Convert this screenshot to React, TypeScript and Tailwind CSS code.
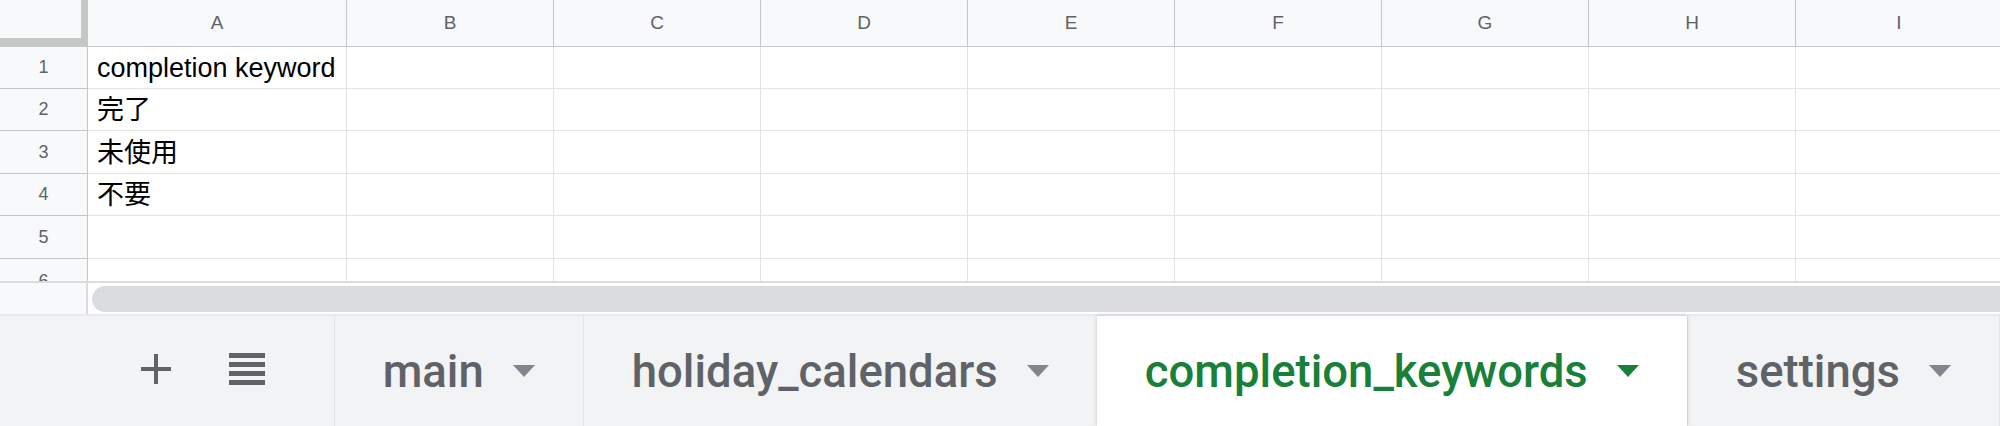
import { Fragment } from "react";

const columns = ["A", "B", "C", "D", "E", "F", "G", "H", "I"];
const rowHeights = ["h-[42px]", "h-[42px]", "h-[43px]", "h-[42px]", "h-[43px]", "h-[22px]"];
const values: Record<number, string> = {
    1: "completion keyword",
    2: "完了",
    3: "未使用",
    4: "不要",
};

const tabs = [
    { name: "main", active: false },
    { name: "holiday_calendars", active: false },
    { name: "completion_keywords", active: true },
    { name: "settings", active: false },
];

const Caret = ({ color }: { color: string }) => (
    <svg width="22" height="12" viewBox="0 0 22 12" className="shrink-0">
        <path d="M0 0 L22 0 L11 12 Z" fill={color} />
    </svg>
);

const SheetTab = ({ name, active }: { name: string, active: boolean }) => {
    if (active) {
        return (
            <div className="relative z-10 flex items-center gap-[29px] px-[48px] bg-white shadow-[0_0_4px_rgba(60,64,67,0.25)]">
                <span className="text-[45.5px] font-medium text-[#188038] pt-[3px]">{name}</span>
                <Caret color="#188038" />
            </div>
        );
    }
    return (
        <div className="flex items-center gap-[29px] px-[48px] border-l border-[#e3e5e8]">
            <span className="text-[45.5px] font-medium text-[#5f6368] pt-[3px]">{name}</span>
            <Caret color="#80868b" />
        </div>
    );
};

export default function App() {
    return (
        <div className="w-[2000px] h-[426px] overflow-hidden bg-white flex flex-col font-['Liberation_Sans','Noto_Sans_CJK_JP',sans-serif]">
            {/* grid */}
            <div className="grid grid-cols-[88px_259px_repeat(8,207px)] w-[2000px] overflow-hidden">
                <div className="h-[47px] bg-[#f8f9fa] border-b border-[#c4c7c5]">
                    <div className="h-[46px] w-[88px] border-r-[7px] border-b-[8px] border-[#c4c7c5]" />
                </div>
                {columns.map((col) => (
                    <div key={col} className="h-[47px] bg-[#f8f9fa] border-b border-r border-[#c4c7c5] flex items-center justify-center text-[19px] text-[#5f6368]">
                        {col}
                    </div>
                ))}
                {rowHeights.map((h, i) => {
                    const row = i + 1;
                    const last = row === rowHeights.length;
                    return (
                        <Fragment key={row}>
                            <div className={`${h} bg-[#f8f9fa] border-r border-[#c4c7c5] ${last ? "" : "border-b"} flex ${last ? "items-start pt-[9px]" : "items-center"} justify-center text-[18px] text-[#5f6368] overflow-hidden`}>
                                {row}
                            </div>
                            {columns.map((col, c) => (
                                <div key={col} className={`${h} border-r border-[#e2e3e3] ${last ? "" : "border-b"} flex items-end pl-[9px] pb-[6px] text-[27px] leading-none text-black whitespace-nowrap overflow-hidden`}>
                                    {c === 0 ? values[row] ?? "" : ""}
                                </div>
                            ))}
                        </Fragment>
                    );
                })}
            </div>

            {/* horizontal scrollbar */}
            <div className="flex h-[33px] border-t-2 border-[#dadce0]">
                <div className="w-[88px] bg-[#f8f9fa] border-r-2 border-[#dadce0]" />
                <div className="flex-1 flex items-center pl-[4px] bg-white">
                    <div className="h-[26px] w-full rounded-l-full bg-[#dadce0]" />
                </div>
            </div>

            {/* sheet tabs */}
            <div className="flex flex-1 bg-[#f1f3f4] border-t-2 border-[#e8eaed] font-['Roboto',sans-serif]">
                <div className="w-[335px] flex items-center">
                    <svg width="30" height="30" viewBox="0 0 30 30" className="ml-[141px] mt-[-4px]">
                        <rect x="13" y="0" width="4" height="30" fill="#5f6368" />
                        <rect x="0" y="13" width="30" height="4" fill="#5f6368" />
                    </svg>
                    <svg width="36" height="32" viewBox="0 0 36 32" className="ml-[58px] mt-[-4px]">
                        <rect x="0" y="0" width="36" height="5" fill="#5f6368" />
                        <rect x="0" y="9" width="36" height="5" fill="#5f6368" />
                        <rect x="0" y="18" width="36" height="5" fill="#5f6368" />
                        <rect x="0" y="27" width="36" height="5" fill="#5f6368" />
                    </svg>
                </div>
                {tabs.map((tab) => (
                    <SheetTab key={tab.name} name={tab.name} active={tab.active} />
                ))}
                <div className="flex-1 border-l border-[#e3e5e8]" />
            </div>
        </div>
    );
}
